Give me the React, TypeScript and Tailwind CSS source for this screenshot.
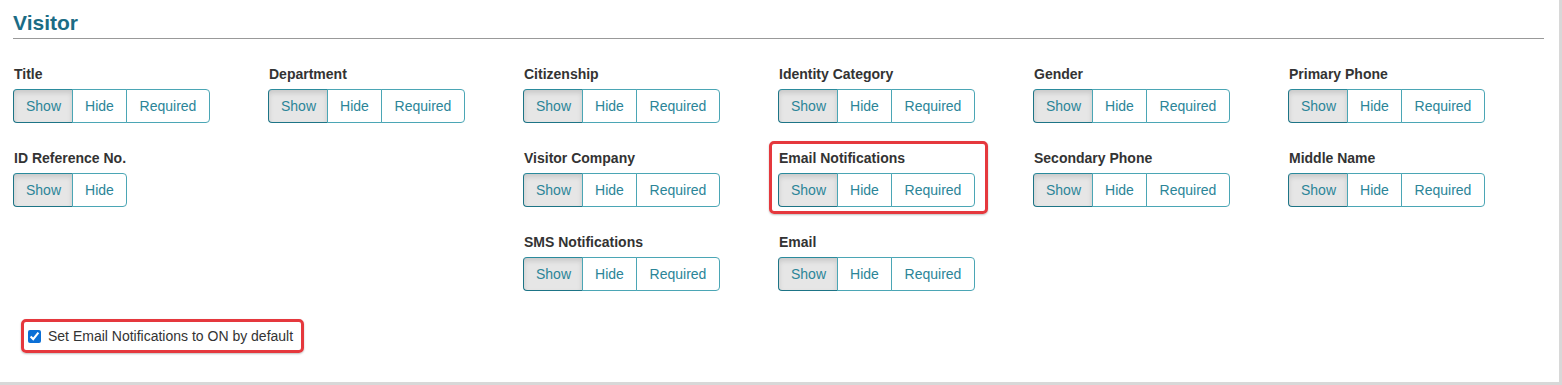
import React from "react";

type Field = { label: string; required?: boolean; highlight?: boolean } | null;

const rows: Field[][] = [
  [
    { label: "Title", required: true },
    { label: "Department", required: true },
    { label: "Citizenship", required: true },
    { label: "Identity Category", required: true },
    { label: "Gender", required: true },
    { label: "Primary Phone", required: true },
  ],
  [
    { label: "ID Reference No.", required: false },
    null,
    { label: "Visitor Company", required: true },
    { label: "Email Notifications", required: true, highlight: true },
    { label: "Secondary Phone", required: true },
    { label: "Middle Name", required: true },
  ],
  [
    null,
    null,
    { label: "SMS Notifications", required: true },
    { label: "Email", required: true },
    null,
    null,
  ],
];

function BtnGroup({ required }: { required: boolean }) {
  return (
    <div className="flex h-[34px] text-[14px] leading-[20px] text-[#2b8598]">
      <button className="h-[34px] px-[12px] w-[60px] bg-[#e6e6e6] border border-[#2a8a9c] border-l-[#1d7486] border-b-[#1d7486] rounded-l-[4px] shadow-[inset_0_3px_5px_rgba(0,0,0,0.125)]">
        Show
      </button>
      <button
        className={
          "h-[34px] px-[12px] w-[55px] bg-white border border-[#4ba6b5] -ml-px " +
          (required ? "" : "rounded-r-[4px]")
        }
      >
        Hide
      </button>
      {required && (
        <button className="h-[34px] px-[12px] w-[84px] bg-white border border-[#4ba6b5] -ml-px rounded-r-[4px]">
          Required
        </button>
      )}
    </div>
  );
}

export default function App() {
  return (
    <div
      className="w-[1562px] h-[385px] bg-white border-r-[3px] border-b-[3px] border-[#d8d8d8] pl-[13px]"
      style={{ fontFamily: '"Liberation Sans", Arial, sans-serif' }}
    >
      <div className="w-[1531px] border-b border-[#999999] pt-[10px] pb-[2px]">
        <h3 className="text-[21px] leading-[26px] font-bold text-[#1b6c85]">Visitor</h3>
      </div>
      <div className="mt-[25px] grid grid-cols-6 w-[1530px] gap-y-[25px]">
        {rows.flat().map((f, i) =>
          f ? (
            <div key={i} className="relative">
              <div className="pl-px text-[14px] leading-[20px] font-bold text-[#333333] mb-[5px]">
                {f.label}
              </div>
              <BtnGroup required={f.required !== false} />
              {f.highlight && (
                <div className="absolute left-[-9px] top-[-7px] w-[219px] h-[73px] border-[3px] border-[#e5383d] rounded-[5px] shadow-[0_1px_2px_rgba(0,0,0,0.25)] pointer-events-none" />
              )}
            </div>
          ) : (
            <div key={i} className="h-[59px]" />
          )
        )}
      </div>
      <div className="mt-[28px] ml-[8px] inline-flex items-center h-[34px] border-[3px] border-[#e5383d] rounded-[5px] pl-[4px] pr-[8px] shadow-[0_1px_2px_rgba(0,0,0,0.25)]">
        <input
          type="checkbox"
          defaultChecked
          className="w-[13px] h-[13px] m-0 mr-[7px] accent-[#0b6fd6]"
        />
        <span className="text-[14px] leading-[20px] text-[#333333]">
          Set Email Notifications to ON by default
        </span>
      </div>
    </div>
  );
}
